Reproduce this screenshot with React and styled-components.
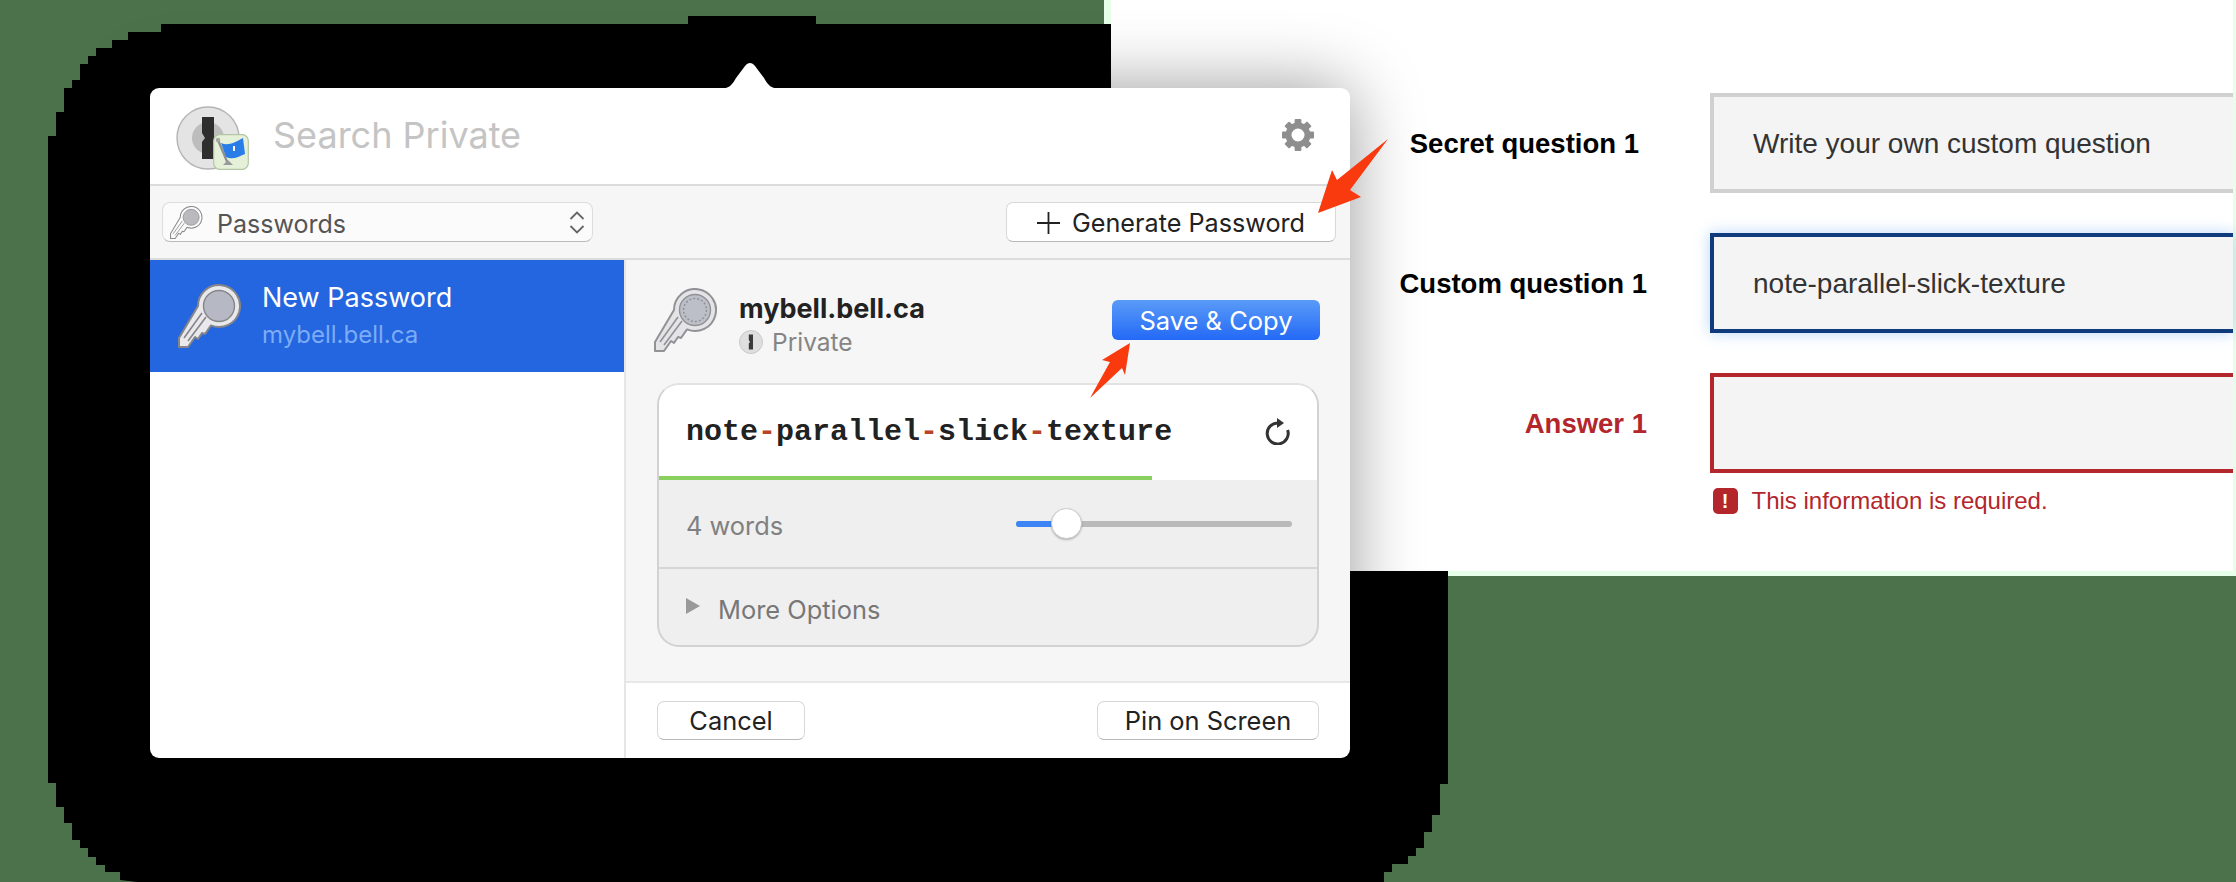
import styled, { createGlobalStyle } from 'styled-components';
import { Fragment } from 'react';

const WORDS = ['note', 'parallel', 'slick', 'texture'];

const SHADOW_MASK = [
  [161, 24], [688, 24], [688, 16], [816, 16], [816, 24], [1120, 24], [1120, 571], [1448, 571],
  [1448, 784], [1440, 784], [1440, 815], [1432, 815], [1432, 832], [1424, 832], [1424, 848],
  [1416, 848], [1416, 856], [1408, 856], [1408, 864], [1392, 864], [1392, 872], [1384, 872],
  [1384, 882], [137, 882], [120, 880], [120, 872], [105, 872], [105, 865], [96, 865], [96, 857],
  [88, 857], [88, 848], [80, 848], [80, 840], [72, 840], [72, 823], [64, 823], [64, 807],
  [56, 807], [56, 783], [48, 783], [48, 136], [56, 136], [56, 112], [64, 112], [64, 88],
  [72, 88], [72, 80], [80, 80], [80, 64], [88, 64], [88, 56], [96, 56], [96, 48], [112, 48],
  [112, 40], [128, 40], [128, 32], [161, 32],
]
  .map(([x, y]) => `${x}px ${y}px`)
  .join(', ');

function KeyIcon({ size = 64, body = '#e9e9ec', line = '#85858a', disc = '#b6b9c4', ring }) {
  return (
    <svg width={size} height={size} viewBox="0 0 64 64">
      <path
        d="M1 54 L20 22 A21 21 0 1 1 33 41.4 L27 50 L24 49 L20 55 L17 53 L10 63 L1 63 Z"
        fill={body}
        stroke={line}
        strokeWidth="2"
        strokeLinejoin="round"
      />
      <path d="M6 54 L24 29 M10 57 L28 33" stroke={line} strokeWidth="1.6" fill="none" />
      <circle cx="41" cy="22" r="15.5" fill={disc} stroke={line} strokeWidth="1.4" />
      {ring && (
        <circle cx="41" cy="22" r="11.5" fill="none" stroke="#8d8f98" strokeWidth="1.4" strokeDasharray="2 2" />
      )}
    </svg>
  );
}

function VaultLogo() {
  return (
    <svg width="73" height="64" viewBox="0 0 73 64">
      <circle cx="32" cy="32" r="31" fill="#e4e4e4" stroke="#b4b4b4" strokeWidth="1.4" />
      <circle cx="32" cy="32" r="16" fill="#bdbdbd" />
      <path d="M26 11 H38 V53 H26 V36 L29 32 L26 27 Z" fill="#2e2e2e" />
      <rect x="37.7" y="28.7" width="34.6" height="34.6" rx="6" fill="#e4f1d8" stroke="#b5c6a4" strokeWidth="1.2" />
      <path d="M42 34 L52 58" stroke="#8f8f8f" strokeWidth="2.2" />
      <path d="M47 59 H57 L52 54 Z" fill="#9a9a9a" />
      <circle cx="42" cy="34" r="2.2" fill="#a8a8a8" />
      <path d="M45 37 C52 40 58 37 67 32 L69 48 C62 51 57 54 50 51 Z" fill="#2a7de8" />
      <rect x="57" y="40" width="2" height="5" fill="#fff" />
    </svg>
  );
}

function GearIcon() {
  return (
    <svg width="32" height="32" viewBox="0 0 32 32">
      {[0, 45, 90, 135, 180, 225, 270, 315].map((deg) => (
        <rect key={deg} x="12.6" y="0" width="6.8" height="7" rx="1" fill="#8e8e8e" transform={`rotate(${deg} 16 16)`} />
      ))}
      <circle cx="16" cy="16" r="9.5" fill="none" stroke="#8e8e8e" strokeWidth="6" />
    </svg>
  );
}

function UpdownIcon() {
  return (
    <svg width="16" height="23" viewBox="0 0 16 23" fill="none" stroke="#666" strokeWidth="1.8">
      <path d="M1.5 8 L8 1.5 L14.5 8" />
      <path d="M1.5 15 L8 21.5 L14.5 15" />
    </svg>
  );
}

function PlusIcon() {
  return (
    <svg width="23" height="22" viewBox="0 0 23 22" stroke="#222" strokeWidth="1.8">
      <path d="M11.5 0 V22 M0 11 H23" />
    </svg>
  );
}

function RefreshIcon() {
  return (
    <svg width="25" height="27" viewBox="0 0 25 27">
      <path d="M13 5 A10.5 10.5 0 1 0 22.6 12" fill="none" stroke="#333" strokeWidth="3" />
      <path d="M12 0 L19 5 L12 10 Z" fill="#333" />
    </svg>
  );
}

function PrivateIcon() {
  return (
    <svg width="24" height="24" viewBox="0 0 24 24">
      <circle cx="12" cy="12" r="11.5" fill="#dfdfdf" stroke="#c9c9c9" />
      <path d="M9.8 4.5 H14 V19.5 H9.8 V13.5 L11 12 L9.8 10 Z" fill="#3a3a3a" />
    </svg>
  );
}

export default function App() {
  return (
    <Stage>
      <GlobalStyle />
      <PageEdge />
      <ShadowMask />

      <FormPage>
        <FormRow>
          <FieldLabel $inset={8}>Secret question 1</FieldLabel>
          <Field>Write your own custom question</Field>
        </FormRow>
        <FormRow>
          <FieldLabel>Custom question 1</FieldLabel>
          <Field $state="focus">note-parallel-slick-texture</Field>
        </FormRow>
        <FormRow>
          <FieldLabel $error>Answer 1</FieldLabel>
          <Field $state="error" />
        </FormRow>
        <ErrorRow>
          <ErrorBadge>!</ErrorBadge>
          <ErrorText>This information is required.</ErrorText>
        </ErrorRow>
      </FormPage>

      <Popover>
        <PopoverTip viewBox="0 0 62 26" width="62" height="26">
          <path d="M0 26 C10 26 13 22 17 15 L26 3 C29 -1 33 -1 36 3 L45 15 C49 22 52 26 62 26 Z" fill="#fff" />
        </PopoverTip>

        <SearchBar>
          <VaultLogo />
          <SearchText>Search Private</SearchText>
          <GearSlot>
            <GearIcon />
          </GearSlot>
        </SearchBar>

        <Toolbar>
          <CategorySelect>
            <KeyIcon size={33} body="#fafafa" line="#8a8a8a" disc="#b9b9be" />
            <CategoryText>Passwords</CategoryText>
            <UpdownIcon />
          </CategorySelect>
          <GenerateButton>
            <PlusIcon />
            Generate Password
          </GenerateButton>
        </Toolbar>

        <Body>
          <Sidebar>
            <ListRow>
              <KeyIcon />
              <ListText>
                <ListTitle>New Password</ListTitle>
                <ListSub>mybell.bell.ca</ListSub>
              </ListText>
            </ListRow>
          </Sidebar>

          <Detail>
            <DetailMain>
              <ItemHead>
                <KeyIcon body="#e4e4e6" line="#929296" disc="#bcbec8" ring />
                <ItemText>
                  <ItemTitle>mybell.bell.ca</ItemTitle>
                  <VaultLine>
                    <PrivateIcon />
                    <VaultName>Private</VaultName>
                  </VaultLine>
                </ItemText>
                <SaveButton>Save &amp; Copy</SaveButton>
              </ItemHead>

              <GeneratorCard>
                <PasswordRow>
                  <PasswordText>
                    {WORDS.map((word, i) => (
                      <Fragment key={word}>
                        {i > 0 && <Dash>-</Dash>}
                        {word}
                      </Fragment>
                    ))}
                  </PasswordText>
                  <RefreshIcon />
                </PasswordRow>
                <StrengthTrack>
                  <StrengthFill style={{ width: `${(496 / 662) * 100}%` }} />
                </StrengthTrack>
                <WordsRow>
                  <MutedText>4 words</MutedText>
                  <Slider>
                    <SliderFill />
                    <SliderThumb />
                  </Slider>
                </WordsRow>
                <OptionsRow>
                  <Disclosure />
                  <MutedText $dim>More Options</MutedText>
                </OptionsRow>
              </GeneratorCard>
            </DetailMain>

            <Footer>
              <FooterButton $width={148}>Cancel</FooterButton>
              <FooterButton $width={222}>Pin on Screen</FooterButton>
            </Footer>
          </Detail>
        </Body>
      </Popover>

      <Callouts viewBox="0 0 2236 882" width="2236" height="882">
        <polygon points="1388,139 1350,190 1361,197 1318,213 1332,170 1337,180" fill="#f93a0e" />
        <polygon points="1130,343 1125,375 1122,368 1090,398 1110,362 1102,360" fill="#f93a0e" />
      </Callouts>
    </Stage>
  );
}

const GlobalStyle = createGlobalStyle`
  html, body {
    margin: 0;
    padding: 0;
    background: #4c724c;
  }
`;

const Stage = styled.div`
  position: relative;
  width: 2236px;
  height: 882px;
  overflow: hidden;
  background: #4c724c;
  font-family: Inter, "Liberation Sans", sans-serif;
`;

const PageEdge = styled.div`
  position: absolute;
  top: 0;
  left: 1104px;
  right: 0;
  height: 576px;
  background: #e6ffe8;
`;

const ShadowMask = styled.div`
  position: absolute;
  inset: 0;
  background: #000;
  clip-path: polygon(${SHADOW_MASK});
`;

const FormPage = styled.div`
  position: absolute;
  top: 0;
  left: 1111px;
  right: 3px;
  height: 571px;
  box-sizing: border-box;
  padding-top: 93px;
  background: #fff;
  font-family: "Liberation Sans", Arial, sans-serif;
`;

const FormRow = styled.div`
  display: grid;
  grid-template-columns: 536px 1fr;
  column-gap: 63px;
  align-items: center;
  margin-bottom: 40px;

  &:nth-child(3) {
    margin-bottom: 14px;
  }
`;

const FieldLabel = styled.label`
  padding: 2px ${({ $inset }) => $inset || 0}px 0 0;
  text-align: right;
  font-size: 27.5px;
  font-weight: 700;
  color: ${({ $error }) => ($error ? '#b3262c' : '#000')};
`;

const FIELD_BORDERS = { focus: '#0f3b7d', error: '#b3262c' };

const Field = styled.div`
  box-sizing: border-box;
  display: flex;
  align-items: center;
  height: 100px;
  padding: 2px 0 0 39px;
  background: #f4f4f4;
  border: 4px solid ${({ $state }) => FIELD_BORDERS[$state] || '#d0d0d0'};
  border-right: 0;
  box-shadow: ${({ $state }) => ($state === 'focus' ? '0 0 14px rgba(80, 150, 240, 0.4)' : 'none')};
  font-size: 28px;
  color: #333;
`;

const ErrorRow = styled.div`
  display: flex;
  align-items: center;
  gap: 14px;
  margin-left: 601.5px;
`;

const ErrorBadge = styled.span`
  display: flex;
  align-items: center;
  justify-content: center;
  width: 25px;
  height: 26px;
  border-radius: 5px;
  background: #b3262c;
  color: #fff;
  font-size: 20px;
  font-weight: 700;
`;

const ErrorText = styled.span`
  font-size: 24px;
  color: #b3262c;
`;

const Popover = styled.div`
  position: absolute;
  left: 150px;
  top: 88px;
  display: flex;
  flex-direction: column;
  width: 1200px;
  height: 670px;
  background: #fff;
  border-radius: 9px;
  box-shadow: 0 0 70px rgba(0, 0, 0, 0.4);
`;

const PopoverTip = styled.svg`
  position: absolute;
  left: 569px;
  top: -25px;
`;

const SearchBar = styled.div`
  box-sizing: border-box;
  display: flex;
  align-items: center;
  flex: 0 0 98px;
  padding: 4px 36px 0 26px;
  border-bottom: 2px solid #dcdcdc;
`;

const SearchText = styled.div`
  flex: 1;
  margin: 0 0 6px 24px;
  font-size: 36px;
  color: #c4c4c4;
`;

const GearSlot = styled.div`
  display: flex;
  margin-bottom: 6px;
`;

const Toolbar = styled.div`
  box-sizing: border-box;
  display: flex;
  align-items: center;
  justify-content: space-between;
  flex: 0 0 74px;
  padding: 0 14px 0 12px;
  background: #f6f6f6;
  border-bottom: 2px solid #dcdcdc;
`;

const CategorySelect = styled.div`
  box-sizing: border-box;
  display: flex;
  align-items: center;
  width: 431px;
  height: 40px;
  padding: 0 7px 0 7px;
  background: #fbfbfb;
  border: 1px solid #ddd;
  border-bottom-color: #bbb;
  border-radius: 8px;
`;

const CategoryText = styled.span`
  flex: 1;
  margin-left: 14px;
  padding-top: 3px;
  font-size: 25px;
  color: #555;
`;

const GenerateButton = styled.div`
  box-sizing: border-box;
  display: flex;
  align-items: center;
  gap: 12px;
  width: 330px;
  height: 40px;
  padding: 1px 0 0 30px;
  background: #fff;
  border: 1px solid #d8d8d8;
  border-bottom-color: #b8b8b8;
  border-radius: 7px;
  font-size: 25.2px;
  color: #222;
`;

const Body = styled.div`
  display: flex;
  flex: 1;
  min-height: 0;
`;

const Sidebar = styled.div`
  flex: 0 0 474px;
  border-right: 2px solid #e6e6e6;
`;

const ListRow = styled.div`
  display: flex;
  align-items: center;
  gap: 20px;
  height: 112px;
  padding-left: 28px;
  background: #2465e0;
`;

const ListText = styled.div`
  display: flex;
  flex-direction: column;
  gap: 6px;
  margin-bottom: 3px;
`;

const ListTitle = styled.div`
  font-size: 27px;
  color: #fff;
`;

const ListSub = styled.div`
  font-size: 24px;
  color: #7cacf5;
`;

const Detail = styled.div`
  display: flex;
  flex: 1;
  flex-direction: column;
  min-width: 0;
`;

const DetailMain = styled.div`
  box-sizing: border-box;
  flex: 1;
  padding: 0 30px 0 28px;
  background: #f6f6f6;
  border-bottom: 2px solid #e8e8e8;
`;

const ItemHead = styled.div`
  display: flex;
  align-items: center;
  height: 120px;
  margin-bottom: 3px;
`;

const ItemText = styled.div`
  flex: 1;
  margin-left: 21px;
  padding-top: 8px;
`;

const ItemTitle = styled.div`
  font-size: 27px;
  font-weight: 700;
  color: #222;
`;

const VaultLine = styled.div`
  display: flex;
  align-items: center;
  gap: 9px;
  margin-top: 2px;
`;

const VaultName = styled.span`
  font-size: 24.5px;
  color: #858585;
`;

const SaveButton = styled.div`
  display: flex;
  align-items: center;
  justify-content: center;
  width: 208px;
  height: 40px;
  border-radius: 6px;
  background: linear-gradient(#5a9bf8, #2369f6);
  color: #fff;
  font-size: 25.5px;
`;

const GeneratorCard = styled.div`
  box-sizing: border-box;
  overflow: hidden;
  height: 264px;
  margin: 0 1px 0 3px;
  background: #efefef;
  border: 2px solid #d2d2d2;
  border-top-color: #e2e2e2;
  border-radius: 22px;
`;

const PasswordRow = styled.div`
  display: flex;
  align-items: center;
  justify-content: space-between;
  height: 91px;
  padding: 2px 27px 0 27px;
  background: #fff;
  box-sizing: border-box;
`;

const PasswordText = styled.div`
  font-family: "Liberation Mono", monospace;
  font-size: 30px;
  font-weight: 700;
  color: #222;
`;

const Dash = styled.span`
  color: #b8432a;
`;

const StrengthTrack = styled.div`
  height: 4px;
  background: #fff;
`;

const StrengthFill = styled.div`
  height: 100%;
  background: #8ad05e;
`;

const WordsRow = styled.div`
  display: flex;
  align-items: center;
  justify-content: space-between;
  height: 87px;
  padding: 0 25px 0 27px;
  border-bottom: 2px solid #d6d6d6;
`;

const MutedText = styled.span`
  padding-top: 3px;
  font-size: 25.4px;
  color: ${({ $dim }) => ($dim ? '#777' : '#808080')};
`;

const Slider = styled.div`
  position: relative;
  width: 276px;
  height: 6px;
  border-radius: 3px;
  background: #bababa;
`;

const SliderFill = styled.div`
  width: 40px;
  height: 100%;
  border-radius: 3px 0 0 3px;
  background: #3d85f5;
`;

const SliderThumb = styled.div`
  position: absolute;
  left: 35px;
  top: -13px;
  box-sizing: border-box;
  width: 31px;
  height: 31px;
  border-radius: 50%;
  background: #fff;
  border: 1px solid #ccc;
  box-shadow: 0 1px 2px rgba(0, 0, 0, 0.25);
`;

const OptionsRow = styled.div`
  display: flex;
  align-items: center;
  gap: 18px;
  height: 78px;
  padding-left: 27px;
`;

const Disclosure = styled.span`
  width: 0;
  height: 0;
  margin-bottom: 4px;
  border-left: 14px solid #999;
  border-top: 8.5px solid transparent;
  border-bottom: 8.5px solid transparent;
`;

const Footer = styled.div`
  display: flex;
  align-items: center;
  justify-content: space-between;
  flex: 0 0 75px;
  padding: 0 31px;
`;

const FooterButton = styled.div`
  box-sizing: border-box;
  display: flex;
  align-items: center;
  justify-content: center;
  width: ${({ $width }) => $width}px;
  height: 39px;
  background: #fff;
  border: 1px solid #d8d8d8;
  border-bottom-color: #b8b8b8;
  border-radius: 7px;
  font-size: 25.4px;
  color: #222;
`;

const Callouts = styled.svg`
  position: absolute;
  inset: 0;
  pointer-events: none;
`;
